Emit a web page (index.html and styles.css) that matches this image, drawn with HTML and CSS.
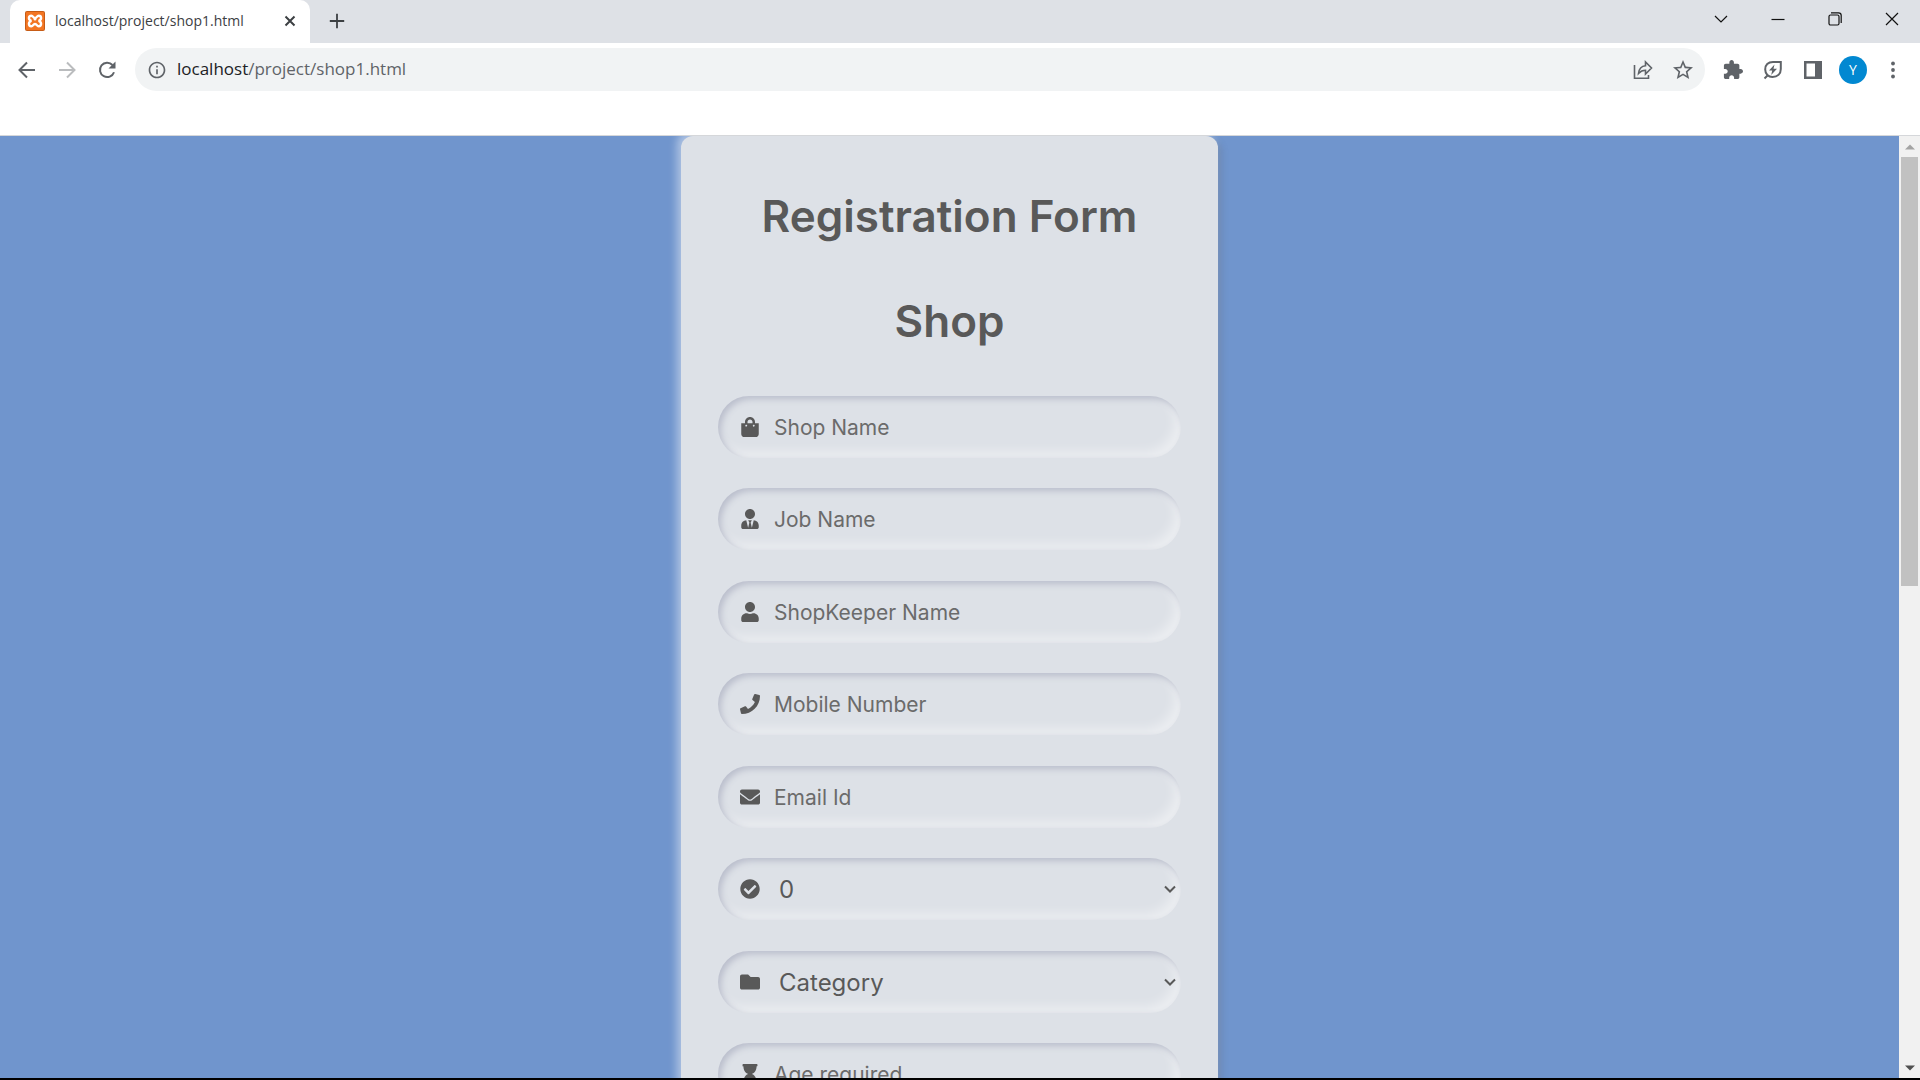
FILE: index.html
```html
<!DOCTYPE html>
<html lang="en">
<head>
<meta charset="utf-8">
<title>localhost/project/shop1.html</title>
<link rel="stylesheet" href="styles.css">
</head>
<body>
<header class="browser">
  <div class="tab-strip">
    <div class="tab">
      <svg class="favicon" viewBox="0 0 20 20"><rect width="20" height="20" rx="2" fill="#c75c16"/><rect x="1" y="1" width="18" height="18" rx="1" fill="#f37623"/><path d="M6.500 9.800C3 9 3.200 4.700 6.300 4.700c2 0 1.700 2.300 3.700 2.300s1.700-2.300 3.700-2.300c3.100 0 3.300 4.300-.2 5.100 3.500.8 3.300 5.500.2 5.500-2 0-1.700-2.300-3.700-2.300s-1.700 2.300-3.700 2.300c-3.100 0-3.300-4.700.2-5.500z" fill="none" stroke="#fff" stroke-width="2.400"/><circle cx="10" cy="8" r="1.500" fill="#fff"/></svg>
      <span class="tab-title">localhost/project/shop1.html</span>
      <button class="tab-close" aria-label="Close tab"><svg viewBox="0 0 20 20"><path d="M5.500 5.500l9 9M14.500 5.500l-9 9" class="stroke thick"/></svg></button>
    </div>
    <button class="new-tab" aria-label="New tab"><svg viewBox="0 0 20 20"><path d="M10 2v16M2 10h16" class="stroke thick"/></svg></button>
    <div class="window-controls">
      <button aria-label="Search tabs"><svg viewBox="0 0 16 16"><path d="M2 5l6 6 6-6" class="stroke"/></svg></button>
      <button aria-label="Minimize"><svg viewBox="0 0 16 16"><path d="M1.500 8.500h13" class="stroke"/></svg></button>
      <button aria-label="Restore"><svg viewBox="0 0 16 16"><rect x="2" y="4" width="10" height="10" rx="1.500" class="stroke"/><path d="M4 1.800h7.500a2.700 2.700 0 0 1 2.700 2.700V12" class="stroke"/></svg></button>
      <button aria-label="Close"><svg viewBox="0 0 16 16"><path d="M2 2l12 12M14 2L2 14" class="stroke"/></svg></button>
    </div>
  </div>
  <div class="toolbar">
    <button class="tool" aria-label="Back"><svg viewBox="0 0 20 20"><path d="M18 10H3M10 2.500L2.500 10l7.500 7.500" class="stroke thick"/></svg></button>
    <button class="tool faded" aria-label="Forward" disabled><svg viewBox="0 0 20 20"><path d="M2 10h15M10 2.500l7.500 7.500-7.500 7.500" class="stroke thick"/></svg></button>
    <button class="tool" aria-label="Reload"><svg viewBox="0 0 20 20"><path d="M15.500 5A7.200 7.200 0 1 0 17 12.200" class="stroke thick"/><path d="M18.500 1.500v7h-7z" fill="currentColor"/></svg></button>
    <div class="omnibox">
      <svg class="info" viewBox="0 0 24 24"><path fill="currentColor" d="M11 17h2v-6h-2v6zm1-15C6.480 2 2 6.480 2 12s4.480 10 10 10 10-4.480 10-10S17.520 2 12 2zm0 18c-4.410 0-8-3.590-8-8s3.590-8 8-8 8 3.590 8 8-3.590 8-8 8zM11 9h2V7h-2v2z"/></svg>
      <a class="address" href="#"><span class="host">localhost</span>/project/shop1.html</a>
      <button class="tool" aria-label="Share"><svg viewBox="0 0 20 20"><path d="M1.500 5v13.200h14V15M5.500 13.500c.5-5 3-7.500 7-7.800V2l6 6-6 6v-3.700c-3 0-5 1-7 3.200z" class="stroke medium"/></svg></button>
      <button class="tool" aria-label="Bookmark"><svg viewBox="2 2 20 20"><path fill="currentColor" d="M22 9.240l-7.190-.62L12 2 9.190 8.630 2 9.240l5.460 4.730L5.820 21 12 17.270 18.180 21l-1.630-7.030L22 9.240zM12 15.400l-3.760 2.270 1-4.280-3.320-2.880 4.380-.38L12 6.100l1.710 4.040 4.380.38-3.320 2.880 1 4.280L12 15.400z"/></svg></button>
    </div>
    <button class="tool" aria-label="Extensions"><svg viewBox="1 1 22 22"><path fill="currentColor" d="M20.500 11H19V7c0-1.100-.9-2-2-2h-4V3.500C13 2.120 11.880 1 10.500 1S8 2.120 8 3.500V5H4c-1.100 0-1.990.9-1.990 2v3.800H3.500c1.490 0 2.700 1.210 2.700 2.700s-1.210 2.700-2.700 2.700H2V20c0 1.100.9 2 2 2h3.800v-1.500c0-1.490 1.210-2.700 2.700-2.700s2.700 1.210 2.700 2.700V22H17c1.100 0 2-.9 2-2v-4h1.500c1.380 0 2.500-1.120 2.500-2.500S21.880 11 20.500 11z"/></svg></button>
    <button class="tool" aria-label="Energy saver"><svg viewBox="0 0 20 20"><path d="M1.500 18.500L4.500 15.500M17.800 2H10C5 2 2.200 5 2.200 9.500 2.200 14 5.500 17 9.500 17c5 0 8.300-3 8.300-8z" class="stroke thick"/><path d="M11.500 4.500l-5.500 6h3.200l-1 4.500 5.800-6.200h-3.500z" fill="currentColor"/></svg></button>
    <button class="tool" aria-label="Side panel"><svg viewBox="0 0 20 20"><path fill="currentColor" fill-rule="evenodd" d="M1 1h18v18H1zM3.500 3.500v13h8.500v-13z"/></svg></button>
    <button class="tool" aria-label="Profile"><span class="avatar">Y</span></button>
    <button class="tool" aria-label="Menu"><svg viewBox="0 0 20 20" fill="currentColor"><circle cx="10" cy="3.500" r="1.900"/><circle cx="10" cy="10" r="1.900"/><circle cx="10" cy="16.500" r="1.900"/></svg></button>
  </div>
</header>

<div class="viewport">
  <main class="page">
    <form class="card">
      <h1 class="heading">Registration Form</h1>
      <h1 class="heading">Shop</h1>
      <div class="fields">
        <label class="field"><svg class="icon" viewBox="0 0 448 512"><path d="M352 160v-32C352 57.420 294.579 0 224 0 153.420 0 96 57.420 96 128v32H0v272c0 44.183 35.817 80 80 80h288c44.183 0 80-35.817 80-80V160h-96zm-192-32c0-35.290 28.710-64 64-64s64 28.710 64 64v32H160v-32zm160 120c-13.255 0-24-10.745-24-24s10.745-24 24-24 24 10.745 24 24-10.745 24-24 24zm-192 0c-13.255 0-24-10.745-24-24s10.745-24 24-24 24 10.745 24 24-10.745 24-24 24z"/></svg><input type="text" placeholder="Shop Name" aria-label="Shop Name"></label>
        <label class="field"><svg class="icon" viewBox="0 0 448 512"><path d="M224 256c70.700 0 128-57.300 128-128S294.700 0 224 0 96 57.300 96 128s57.300 128 128 128zm95.800 32.600L272 480l-32-136 32-56h-96l32 56-32 136-47.800-191.400C56.900 292 0 350.300 0 422.400V464c0 26.500 21.500 48 48 48h352c26.500 0 48-21.500 48-48v-41.600c0-72.100-56.900-130.400-128.200-133.800z"/></svg><input type="text" placeholder="Job Name" aria-label="Job Name"></label>
        <label class="field"><svg class="icon" viewBox="0 0 448 512"><path d="M224 256c70.700 0 128-57.300 128-128S294.700 0 224 0 96 57.300 96 128s57.300 128 128 128zm89.600 32h-16.700c-22.200 10.200-46.900 16-72.900 16s-50.600-5.800-72.900-16h-16.700C60.200 288 0 348.200 0 422.400V464c0 26.500 21.500 48 48 48h352c26.500 0 48-21.500 48-48v-41.600c0-74.200-60.200-134.400-134.400-134.400z"/></svg><input type="text" placeholder="ShopKeeper Name" aria-label="ShopKeeper Name"></label>
        <label class="field"><svg class="icon" viewBox="0 0 512 512"><path d="M493.400 24.600l-104-24c-11.300-2.600-22.900 3.300-27.500 13.900l-48 112c-4.200 9.800-1.400 21.300 6.900 28l60.600 49.600c-36 76.700-98.900 140.500-177.200 177.200l-49.600-60.600c-6.800-8.300-18.200-11.100-28-6.900l-112 48C3.900 366.500-2 378.100.6 389.400l24 104C27.100 504.200 36.700 512 48 512c256.100 0 464-207.500 464-464 0-11.200-7.700-20.900-18.600-23.400z"/></svg><input type="tel" placeholder="Mobile Number" aria-label="Mobile Number"></label>
        <label class="field"><svg class="icon" viewBox="0 0 512 512"><path d="M502.300 190.800c3.900-3.100 9.700-.2 9.700 4.700V400c0 26.500-21.500 48-48 48H48c-26.500 0-48-21.500-48-48V195.600c0-5 5.700-7.800 9.700-4.700 22.400 17.400 52.100 39.500 154.100 113.600 21.100 15.400 56.700 47.800 92.200 47.600 35.700.3 72-32.800 92.300-47.600 102-74.100 131.600-96.300 154-113.700zM256 320c23.200.4 56.600-29.200 73.400-41.400 132.700-96.300 142.800-104.700 173.400-128.700 5.800-4.500 9.200-11.500 9.200-18.900v-19c0-26.500-21.500-48-48-48H48c-26.500 0-48 21.500-48 48v19c0 7.400 3.400 14.300 9.200 18.900 30.600 23.900 40.700 32.400 173.400 128.700 16.800 12.200 50.200 41.800 73.400 41.400z"/></svg><input type="email" placeholder="Email Id" aria-label="Email Id"></label>
        <label class="field"><svg class="icon" viewBox="0 0 512 512"><path d="M504 256c0 136.967-111.033 248-248 248S8 392.967 8 256 119.033 8 256 8s248 111.033 248 248zM227.314 387.314l184-184c6.248-6.248 6.248-16.379 0-22.627l-22.627-22.627c-6.248-6.249-16.379-6.249-22.628 0L216 308.118l-70.059-70.059c-6.248-6.248-16.379-6.248-22.628 0l-22.627 22.627c-6.248 6.248-6.248 16.379 0 22.627l104 104c6.249 6.249 16.379 6.249 22.628.001z"/></svg><select aria-label="Number"><option>0</option></select><svg class="arrow" viewBox="0 0 12 12"><path d="M1 3.500l5 5 5-5" class="stroke thick"/></svg></label>
        <label class="field"><svg class="icon" viewBox="0 0 512 512"><path d="M464 128H272l-64-64H48C21.490 64 0 85.490 0 112v288c0 26.510 21.490 48 48 48h416c26.510 0 48-21.490 48-48V176c0-26.510-21.490-48-48-48z"/></svg><select aria-label="Category"><option>Category</option></select><svg class="arrow" viewBox="0 0 12 12"><path d="M1 3.500l5 5 5-5" class="stroke thick"/></svg></label>
        <label class="field"><svg class="icon" viewBox="0 0 384 512"><path d="M360 64c13.255 0 24-10.745 24-24V24c0-13.255-10.745-24-24-24H24C10.745 0 0 10.745 0 24v16c0 13.255 10.745 24 24 24 0 90.965 51.016 167.734 120.842 192C75.016 280.266 24 357.035 24 448c-13.255 0-24 10.745-24 24v16c0 13.255 10.745 24 24 24h336c13.255 0 24-10.745 24-24v-16c0-13.255-10.745-24-24-24 0-90.965-51.016-167.734-120.842-192C308.984 231.734 360 154.965 360 64z"/></svg><input type="text" placeholder="Age required" aria-label="Age required"></label>
      </div>
    </form>
  </main>
  <div class="scrollbar">
    <button class="scroll-button dim" aria-label="Scroll up"><svg viewBox="0 0 10 10"><path d="M0 7.500h10L5 2.500z"/></svg></button>
    <div class="thumb"></div>
    <div class="track"></div>
    <button class="scroll-button" aria-label="Scroll down"><svg viewBox="0 0 10 10"><path d="M0 2.500h10L5 7.500z"/></svg></button>
  </div>
</div>
</body>
</html>
```
FILE: styles.css
```css
* { box-sizing: border-box; }

body {
  margin: 0;
  height: 100vh;
  display: flex;
  flex-direction: column;
  overflow: hidden;
  border-bottom: 2px solid #000;
  background: #fff;
  font-family: Inter, "Liberation Sans", sans-serif;
}

button {
  display: flex;
  align-items: center;
  justify-content: center;
  padding: 0;
  border: 0;
  background: none;
  color: inherit;
  font: inherit;
}

svg { display: block; flex: none; }

.stroke { fill: none; stroke: currentColor; stroke-width: 1.2; }
.medium { stroke-width: 1.6; }
.thick { stroke-width: 2; }

/* Browser frame */
.browser {
  flex: none;
  border-bottom: 1px solid #d5d7da;
  font-family: "Open Sans", sans-serif;
  color: #5f6368;
}

.tab-strip {
  display: flex;
  height: 43px;
  padding-left: 10px;
  background: #dee1e6;
}

.tab {
  display: flex;
  align-items: center;
  gap: 10px;
  width: 300px;
  padding: 0 10px 2px 15px;
  border-radius: 10px 10px 0 0;
  background: #fff;
  color: #3c4043;
}

.favicon { width: 20px; height: 20px; }
.tab-title { flex: 1; font-size: 14px; line-height: 20px; white-space: nowrap; }
.tab-close svg { width: 20px; height: 20px; }

.new-tab { width: 54px; padding-bottom: 1px; color: #3c4043; }
.new-tab svg { width: 18px; height: 18px; }

.window-controls { display: flex; margin-left: auto; color: #111; }
.window-controls button { width: 57px; height: 37px; }
.window-controls svg { width: 16px; height: 16px; }

.toolbar {
  display: flex;
  align-items: center;
  padding: 5px 7px 44px;
}

.tool { width: 40px; height: 40px; }
.tool svg { width: 20px; height: 20px; }
.tool.faded { color: #babcbe; }

.omnibox {
  flex: 1;
  display: flex;
  align-items: center;
  height: 43px;
  margin: 0 8px;
  padding: 0 2px 0 12px;
  border-radius: 22px;
  background: #f1f3f4;
}

.info { width: 20px; height: 20px; margin-right: 10px; }

.address {
  flex: 1;
  padding-bottom: 1px;
  font-size: 17px;
  line-height: 24px;
  color: #5f6368;
  text-decoration: none;
}

.host { color: #202124; }

.avatar {
  width: 28px;
  height: 28px;
  border-radius: 50%;
  background: #0288d1;
  color: #fff;
  font-size: 14px;
  line-height: 28px;
}

/* Web page */
.viewport { flex: 1; display: flex; min-height: 0; }

.page {
  flex: 1;
  display: flex;
  justify-content: center;
  align-items: flex-start;
  overflow: hidden;
  background: #7095cd;
}

.card {
  width: 537px;
  max-width: 100%;
  padding: 28px 37px;
  border-radius: 12px;
  background: #dde1e7;
  box-shadow: -4px -4px 9px #ffffff73, 4px 4px 6px rgba(94, 104, 121, .29);
  color: #595959;
}

.heading {
  margin: 0;
  font-size: 44px;
  font-weight: 600;
  line-height: 105px;
  text-align: center;
}

.fields { margin-top: 22px; }

.field {
  display: flex;
  align-items: center;
  height: 62px;
  margin-bottom: 30px;
  padding: 0 5px 0 22px;
  border-radius: 31px;
  box-shadow: inset 3px 3px 6px #babecc, inset -6px -6px 12px #ffffff73;
}

.field:nth-child(even) { margin-bottom: 31px; }

.icon { width: 20px; height: 20px; fill: #595959; }

.field input,
.field select {
  flex: 1;
  min-width: 0;
  height: 100%;
  padding: 0 0 0 14px;
  border: 0;
  outline: 0;
  appearance: none;
  background: none;
  font: 21px Inter, sans-serif;
  color: #595959;
}

.field select { padding-left: 19px; font-size: 24px; }
.field input::placeholder { color: #6b6b6b; opacity: 1; }

.arrow { width: 12px; height: 12px; color: #595959; }

.scrollbar {
  display: flex;
  flex-direction: column;
  width: 21px;
  background: #f1f1f1;
}

.scroll-button { height: 21px; color: #505050; }
.scroll-button svg { width: 10px; height: 10px; fill: currentColor; }
.dim { color: #a3a3a3; }
.thumb { flex: 10; margin: 0 2px; background: #c1c1c1; }
.track { flex: 11; }
```
